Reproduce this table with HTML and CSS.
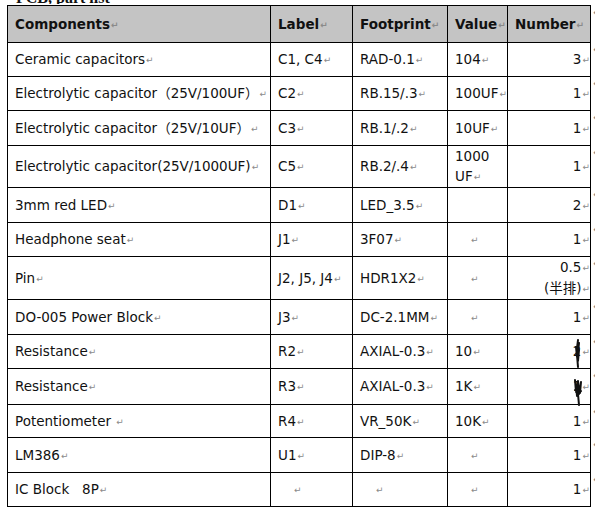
FILE: index.html
```html
<!DOCTYPE html>
<html>
<head>
<meta charset="utf-8">
<link rel="stylesheet" href="styles.css">
</head>
<body>
<div class="caption"><span>PCB, part list</span></div>
<table class="parts">
  <colgroup>
    <col class="c-comp"><col class="c-label"><col class="c-foot"><col class="c-val"><col class="c-num"><col class="c-eor">
  </colgroup>
  <tr class="head">
    <th>Components<span class="pm">↵</span></th>
    <th>Label<span class="pm">↵</span></th>
    <th>Footprint<span class="pm">↵</span></th>
    <th>Value<span class="pm">↵</span></th>
    <th class="num">Number<span class="pm">↵</span></th>
    <td class="eor">↵</td>
  </tr>
  <tr>
    <td>Ceramic capacitors<span class="pm">↵</span></td>
    <td>C1, C4<span class="pm">↵</span></td>
    <td>RAD-0.1<span class="pm">↵</span></td>
    <td>104<span class="pm">↵</span></td>
    <td class="num">3<span class="pm">↵</span></td>
    <td class="eor">↵</td>
  </tr>
  <tr>
    <td>Electrolytic capacitor（25V/100UF）<span class="pm">↵</span></td>
    <td>C2<span class="pm">↵</span></td>
    <td>RB.15/.3<span class="pm">↵</span></td>
    <td>100UF<span class="pm">↵</span></td>
    <td class="num">1<span class="pm">↵</span></td>
    <td class="eor">↵</td>
  </tr>
  <tr class="r35">
    <td>Electrolytic capacitor（25V/10UF）<span class="pm">↵</span></td>
    <td>C3<span class="pm">↵</span></td>
    <td>RB.1/.2<span class="pm">↵</span></td>
    <td>10UF<span class="pm">↵</span></td>
    <td class="num">1<span class="pm">↵</span></td>
    <td class="eor">↵</td>
  </tr>
  <tr class="tall">
    <td>Electrolytic capacitor(25V/1000UF)<span class="pm">↵</span></td>
    <td>C5<span class="pm">↵</span></td>
    <td>RB.2/.4<span class="pm">↵</span></td>
    <td class="wrap">1000<br>UF<span class="pm">↵</span></td>
    <td class="num">1<span class="pm">↵</span></td>
    <td class="eor">↵</td>
  </tr>
  <tr class="r35">
    <td>3mm red LED<span class="pm">↵</span></td>
    <td>D1<span class="pm">↵</span></td>
    <td>LED_3.5<span class="pm">↵</span></td>
    <td></td>
    <td class="num">2<span class="pm">↵</span></td>
    <td class="eor">↵</td>
  </tr>
  <tr>
    <td>Headphone seat<span class="pm">↵</span></td>
    <td>J1<span class="pm">↵</span></td>
    <td>3F07<span class="pm">↵</span></td>
    <td class="empty"><span class="pm">↵</span></td>
    <td class="num">1<span class="pm">↵</span></td>
    <td class="eor">↵</td>
  </tr>
  <tr class="tall">
    <td>Pin<span class="pm">↵</span></td>
    <td>J2, J5, J4<span class="pm">↵</span></td>
    <td>HDR1X2<span class="pm">↵</span></td>
    <td class="empty"><span class="pm">↵</span></td>
    <td class="num">0.5<span class="pm">↵</span><br>(半排)<span class="pm">↵</span></td>
    <td class="eor">↵</td>
  </tr>
  <tr class="r35">
    <td>DO-005 Power Block<span class="pm">↵</span></td>
    <td>J3<span class="pm">↵</span></td>
    <td>DC-2.1MM<span class="pm">↵</span></td>
    <td class="empty"><span class="pm">↵</span></td>
    <td class="num">1<span class="pm">↵</span></td>
    <td class="eor">↵</td>
  </tr>
  <tr>
    <td>Resistance<span class="pm">↵</span></td>
    <td>R2<span class="pm">↵</span></td>
    <td>AXIAL-0.3<span class="pm">↵</span></td>
    <td>10<span class="pm">↵</span></td>
    <td class="num scribbled">2<span class="pm">↵</span>
      <svg class="scribble s1" width="10" height="30" viewBox="0 0 10 30"><path d="M5 1 L4 9 L6 4 L5 14 L3 8 L4 18 L6 11 L5 22 L4 16 L5 28" fill="none" stroke="#111" stroke-width="2" stroke-linecap="round" stroke-linejoin="round"/></svg>
    </td>
    <td class="eor">↵</td>
  </tr>
  <tr class="r36">
    <td>Resistance<span class="pm">↵</span></td>
    <td>R3<span class="pm">↵</span></td>
    <td>AXIAL-0.3<span class="pm">↵</span></td>
    <td>1K<span class="pm">↵</span></td>
    <td class="num scribbled">1<span class="pm">↵</span>
      <svg class="scribble s2" width="12" height="28" viewBox="0 0 12 28"><path d="M3 2 L4 14 L6 3 L7 16 L9 4 L8 15 L3 12 L9 13 L6 16 L7 27 M4 8 L5 18 L7 9" fill="none" stroke="#111" stroke-width="2" stroke-linecap="round" stroke-linejoin="round"/></svg>
    </td>
    <td class="eor">↵</td>
  </tr>
  <tr class="r33">
    <td>Potentiometer <span class="pm">↵</span></td>
    <td>R4<span class="pm">↵</span></td>
    <td>VR_50K<span class="pm">↵</span></td>
    <td>10K<span class="pm">↵</span></td>
    <td class="num">1<span class="pm">↵</span></td>
    <td class="eor">↵</td>
  </tr>
  <tr class="r35">
    <td>LM386<span class="pm">↵</span></td>
    <td>U1<span class="pm">↵</span></td>
    <td>DIP-8<span class="pm">↵</span></td>
    <td class="empty"><span class="pm">↵</span></td>
    <td class="num">1<span class="pm">↵</span></td>
    <td class="eor">↵</td>
  </tr>
  <tr>
    <td>IC Block&nbsp;&nbsp;&nbsp;8P<span class="pm">↵</span></td>
    <td class="empty"><span class="pm">↵</span></td>
    <td class="empty"><span class="pm">↵</span></td>
    <td class="empty"><span class="pm">↵</span></td>
    <td class="num">1<span class="pm">↵</span></td>
    <td class="eor">↵</td>
  </tr>
</table>
</body>
</html>
```
FILE: styles.css
```css
html, body {
  margin: 0;
  padding: 0;
  background: #ffffff;
}

body {
  width: 595px;
  height: 508px;
  overflow: hidden;
  font-family: "DejaVu Sans", Verdana, "Noto Sans CJK SC", sans-serif;
  font-size: 13.5px;
  color: #111111;
}

.caption {
  height: 4px;
  overflow: hidden;
  display: flex;
  align-items: flex-end;
  padding-left: 16px;
}

.caption span {
  font-family: "Liberation Serif", serif;
  font-weight: bold;
  font-size: 16px;
  line-height: 16px;
  margin-bottom: -2px;
}

.parts {
  border-collapse: collapse;
  table-layout: fixed;
  margin-top: 1px;
  margin-left: 7px;
  width: 588px;
}

.c-comp { width: 263px; }
.c-label { width: 82px; }
.c-foot { width: 95px; }
.c-val { width: 60px; }
.c-num { width: 83px; }
.c-eor { width: 5px; }

.parts th,
.parts td {
  border: 1px solid #000;
  padding: 0 7px;
  line-height: 20px;
  height: 33px;
  text-align: left;
  vertical-align: middle;
  white-space: nowrap;
  overflow: visible;
}

.parts tr.head th {
  background: #c4c4c4;
  font-weight: bold;
  height: 35px;
  padding-top: 1px;
}

.parts tr.r35 td { height: 34px; }
.parts tr.r36 td { height: 35px; }
.parts tr.r33 td { height: 32px; }
.parts tr.tall td { height: 41px; }

.parts .num {
  text-align: right;
  padding-right: 0;
}

.parts th.num {
  text-align: left;
}

.parts .empty {
  padding-left: 22px;
}

.parts td.eor {
  border: none;
  padding: 0 0 0 2px;
  vertical-align: top;
  font-size: 10px;
  line-height: 14px;
  color: #8a8a8a;
}

.pm {
  font-size: 9px;
  color: #8a8a8a;
  margin-left: 1px;
  vertical-align: 1px;
}

.scribbled {
  position: relative;
}

.scribble {
  position: absolute;
}

.s1 {
  right: 7px;
  top: 4px;
}

.s2 {
  right: 6px;
  top: 9px;
}
```
